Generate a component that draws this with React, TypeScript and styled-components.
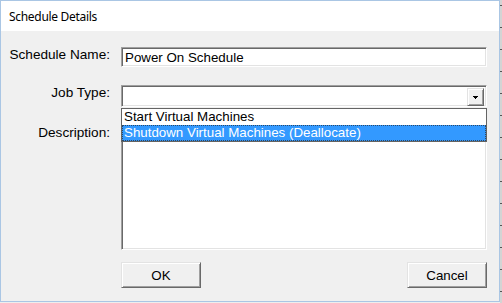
import React from "react";
import styled, { createGlobalStyle, css } from "styled-components";

const Global = createGlobalStyle`
  html, body { margin: 0; padding: 0; }
  body { width: 502px; height: 303px; overflow: hidden; background: #eeeeee; }
  #root { width: 502px; height: 303px; display: flex; align-items: flex-start; }
`;

const sunken = css`
  box-sizing: border-box;
  background: #ffffff;
  border: 1px solid;
  border-color: #a0a0a0 #ffffff #ffffff #a0a0a0;
  box-shadow: inset 1px 1px 0 #696969, inset -1px -1px 0 #e3e3e3;
`;

const raised = css`
  box-sizing: border-box;
  background: #f0f0f0;
  border: 1px solid;
  border-color: #e3e3e3 #696969 #696969 #e3e3e3;
  box-shadow: inset 1px 1px 0 #ffffff, inset -1px -1px 0 #a0a0a0;
`;

const Window = styled.div`
  width: 500px;
  height: 302px;
  box-sizing: border-box;
  border: 1px solid #aac6e4;
  display: flex;
  flex-direction: column;
  background: #f0f0f0;
`;

const EdgeStrip = styled.div`
  width: 2px;
  height: 303px;
  background-color: #d4d4d4;
  background-image: repeating-linear-gradient(
    to bottom,
    transparent 0px,
    transparent 5px,
    #555555 5px,
    #555555 6px,
    transparent 6px,
    transparent 22px
  );
`;

const TitleBar = styled.div`
  height: 30px;
  flex: none;
  background: #ffffff;
  display: flex;
  align-items: center;
  padding-left: 8px;
  font: 12px "Noto Sans", "Open Sans", sans-serif;
  letter-spacing: -0.3px;
  color: #000000;
`;

const Form = styled.div`
  flex: 1;
  display: flex;
  flex-direction: column;
  padding-top: 16px;
  font: 13.33px "Liberation Sans", Arial, sans-serif;
  color: #000000;
`;

const Row = styled.div<{ $gap: number; $align?: string }>`
  display: grid;
  grid-template-columns: 109px 366px;
  column-gap: 11px;
  margin-top: ${(p) => p.$gap}px;
  align-items: ${(p) => p.$align ?? "start"};
`;

const Label = styled.div<{ $pad?: number }>`
  text-align: right;
  font-size: 13.6px;
  padding-top: ${(p) => p.$pad ?? 0}px;
  white-space: nowrap;
`;

const TextBox = styled.div`
  ${sunken};
  height: 20px;
  padding: 0 3px;
  display: flex;
  align-items: center;
  white-space: nowrap;
`;

const ComboWrap = styled.div`
  position: relative;
  height: 22px;
`;

const ComboField = styled.div`
  ${sunken};
  height: 22px;
  display: flex;
  justify-content: flex-end;
  padding: 2px;
`;

const ComboButton = styled.div`
  ${raised};
  width: 17px;
  height: 18px;
  display: flex;
  align-items: center;
  justify-content: center;
  padding-top: 1px;
`;

const DropList = styled.div`
  position: absolute;
  left: 0;
  top: 23px;
  width: 366px;
  box-sizing: border-box;
  border: 1px solid #646464;
  background: #ffffff;
  z-index: 2;
`;

const Option = styled.div<{ $selected?: boolean }>`
  height: 16px;
  line-height: 16px;
  padding-left: 2px;
  white-space: nowrap;
  background: ${(p) => (p.$selected ? "#3399ff" : "#ffffff")};
  color: ${(p) => (p.$selected ? "#ffffff" : "#000000")};
  ${(p) =>
    p.$selected &&
    css`
      outline: 1px dotted rgba(40, 40, 40, 0.7);
      outline-offset: -1px;
    `}
`;

const TextArea = styled.div`
  ${sunken};
  height: 130px;
`;

const ButtonBar = styled.div`
  grid-column: 2;
  display: flex;
  justify-content: space-between;
`;

const PushButton = styled.div`
  ${raised};
  width: 80px;
  height: 26px;
  display: flex;
  align-items: center;
  justify-content: center;
`;

const Arrow = () => (
  <svg width="5" height="3" viewBox="0 0 5 3" shapeRendering="crispEdges">
    <path d="M0 0h5v1H0z M1 1h3v1H1z M2 2h1v1H2z" fill="#000" />
  </svg>
);

export default function App() {
  return (
    <>
      <Global />
      <Window>
        <TitleBar>Schedule Details</TitleBar>
        <Form>
          <Row $gap={0}>
            <Label>Schedule Name:</Label>
            <TextBox>Power On Schedule</TextBox>
          </Row>
          <Row $gap={18}>
            <Label>Job Type:</Label>
            <ComboWrap>
              <ComboField>
                <ComboButton>
                  <Arrow />
                </ComboButton>
              </ComboField>
              <DropList>
                <Option>Start Virtual Machines</Option>
                <Option $selected>Shutdown Virtual Machines (Deallocate)</Option>
              </DropList>
            </ComboWrap>
          </Row>
          <Row $gap={13}>
            <Label $pad={5}>Description:</Label>
            <TextArea />
          </Row>
          <Row $gap={12}>
            <ButtonBar>
              <PushButton>OK</PushButton>
              <PushButton>Cancel</PushButton>
            </ButtonBar>
          </Row>
        </Form>
      </Window>
      <EdgeStrip />
    </>
  );
}
